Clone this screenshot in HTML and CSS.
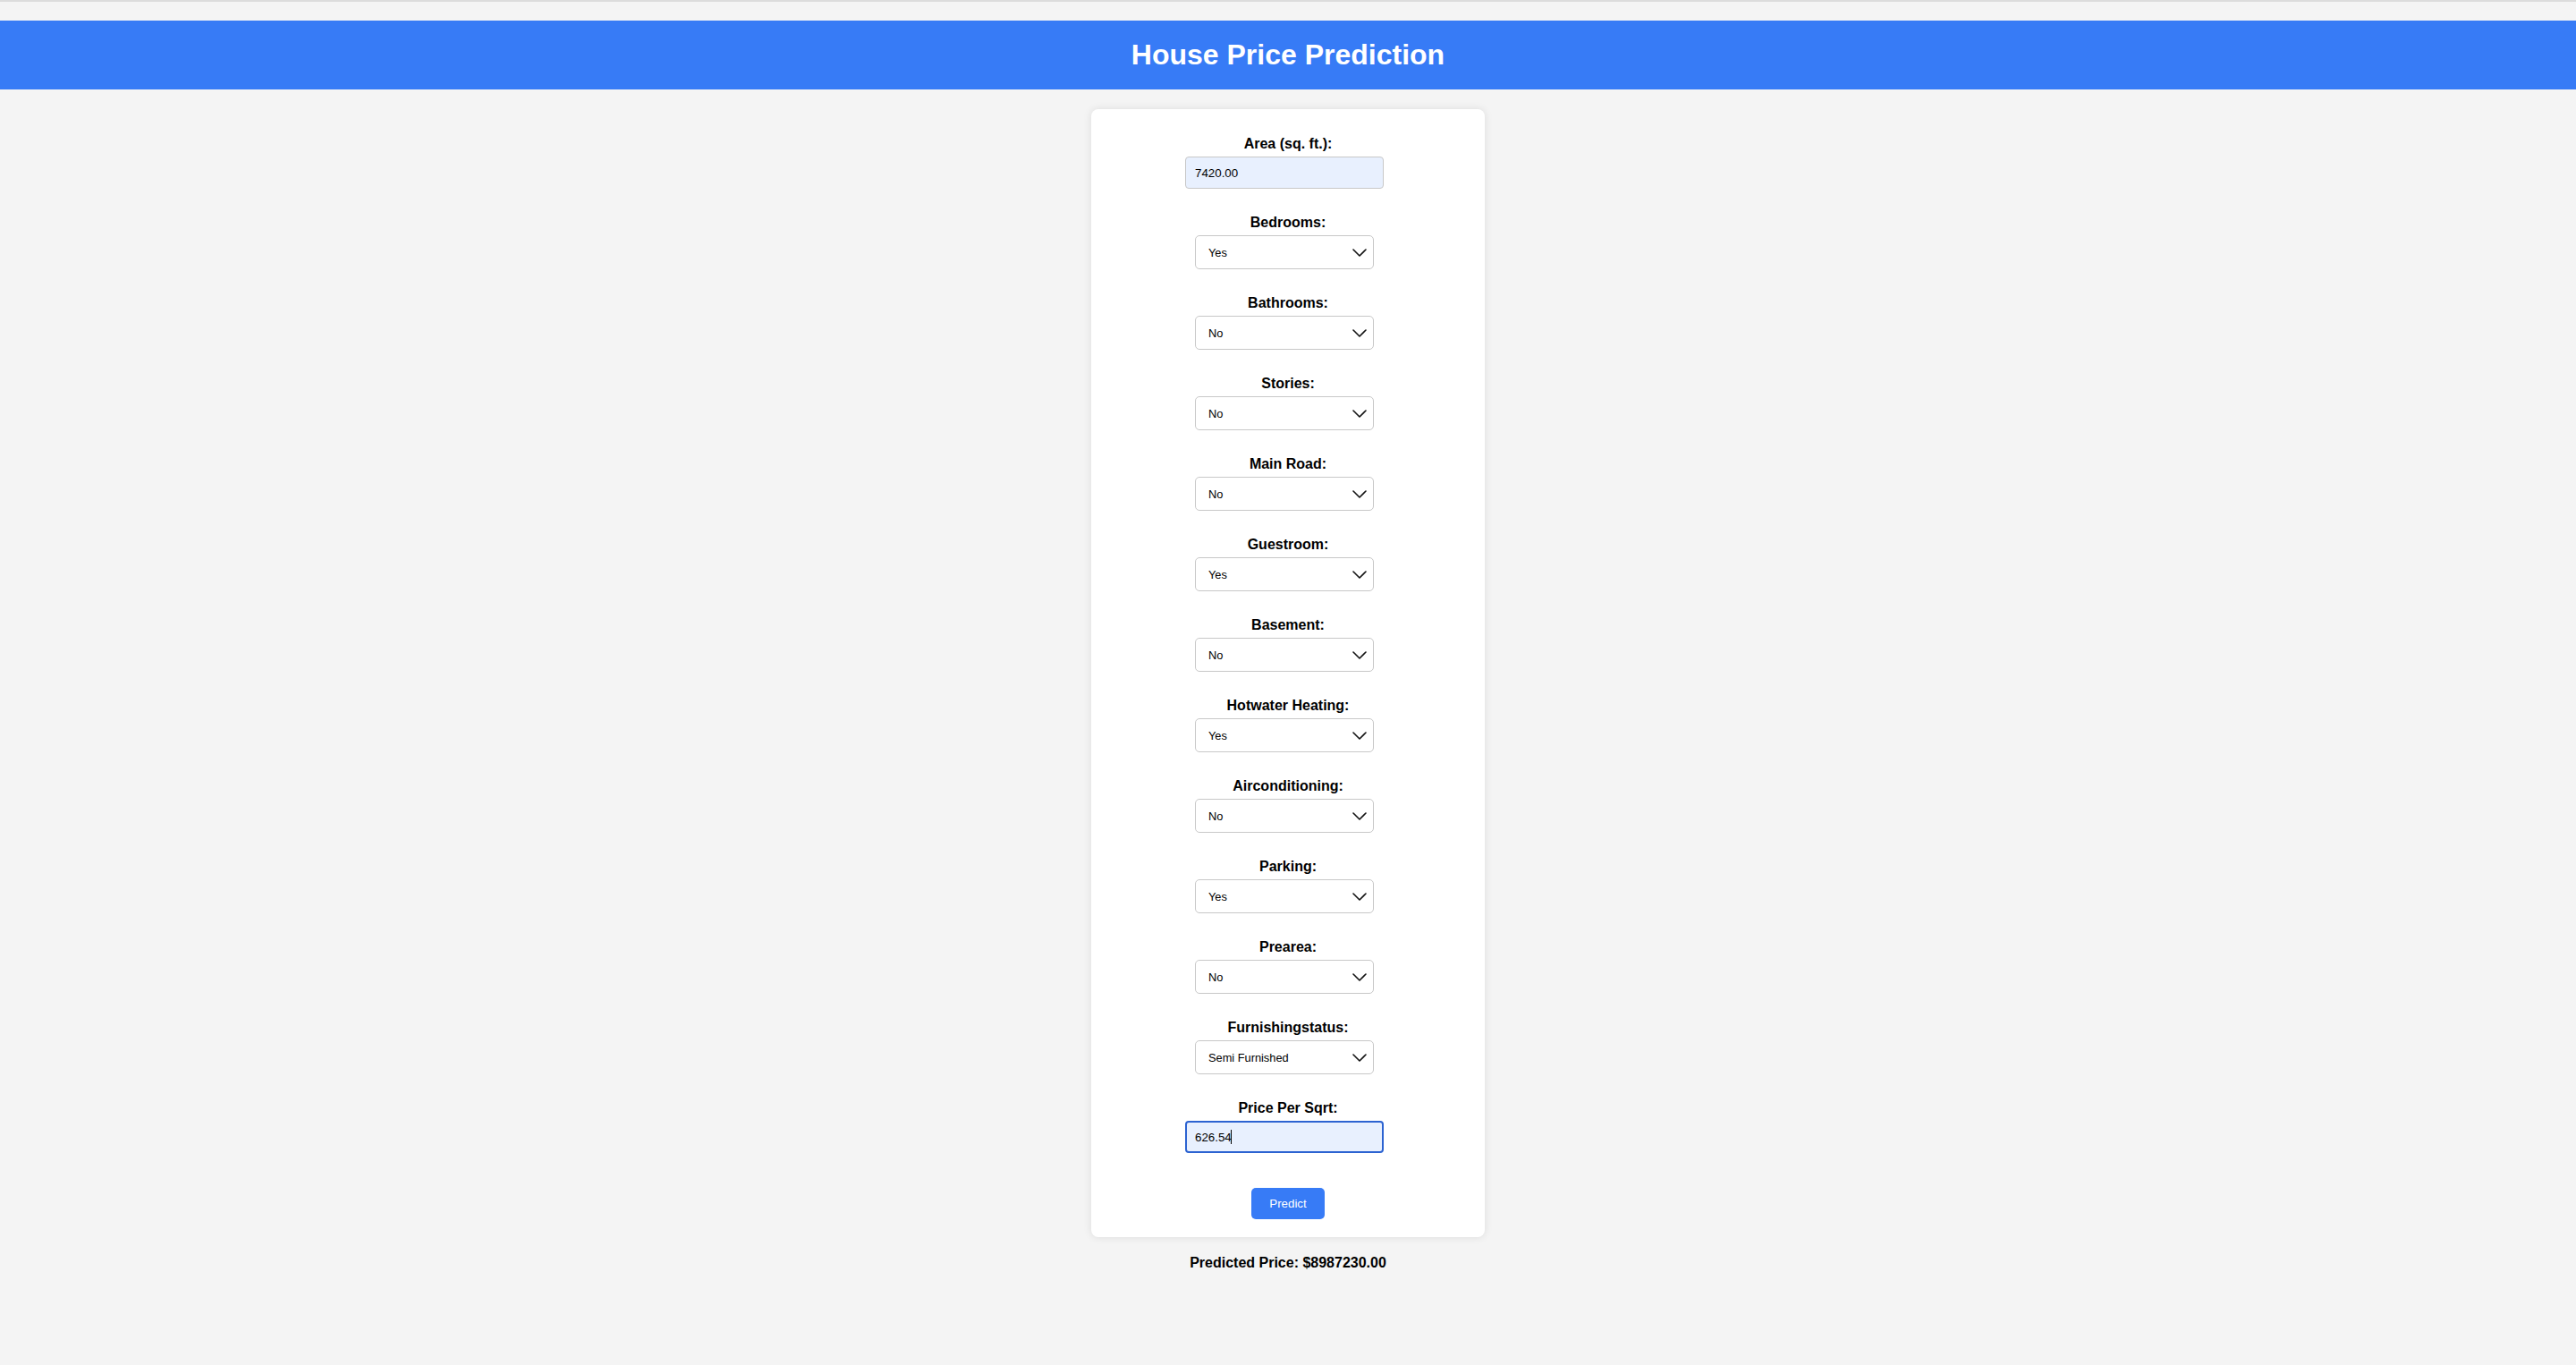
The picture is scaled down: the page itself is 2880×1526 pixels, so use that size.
FILE: index.html
```html
<!DOCTYPE html>
<html lang="en">
<head>
<meta charset="utf-8">
<title>House Price Prediction</title>
<link rel="stylesheet" href="styles.css">
</head>
<body>
<div class="topline"></div>
<header class="header"><h1>House Price Prediction</h1></header>
<main class="container">
  <form class="card">
    <div class="group">
      <label>Area (sq. ft.):</label>
      <input class="field" type="text" value="7420.00">
    </div>
    <div class="group">
      <label>Bedrooms:</label>
      <div class="select-wrap"><select><option>Yes</option><option>No</option></select><svg class="chev" viewBox="0 0 16 9"><path d="M1 1 L8 8 L15 1"/></svg></div>
    </div>
    <div class="group">
      <label>Bathrooms:</label>
      <div class="select-wrap"><select><option>No</option><option>Yes</option></select><svg class="chev" viewBox="0 0 16 9"><path d="M1 1 L8 8 L15 1"/></svg></div>
    </div>
    <div class="group">
      <label>Stories:</label>
      <div class="select-wrap"><select><option>No</option><option>Yes</option></select><svg class="chev" viewBox="0 0 16 9"><path d="M1 1 L8 8 L15 1"/></svg></div>
    </div>
    <div class="group">
      <label>Main Road:</label>
      <div class="select-wrap"><select><option>No</option><option>Yes</option></select><svg class="chev" viewBox="0 0 16 9"><path d="M1 1 L8 8 L15 1"/></svg></div>
    </div>
    <div class="group">
      <label>Guestroom:</label>
      <div class="select-wrap"><select><option>Yes</option><option>No</option></select><svg class="chev" viewBox="0 0 16 9"><path d="M1 1 L8 8 L15 1"/></svg></div>
    </div>
    <div class="group">
      <label>Basement:</label>
      <div class="select-wrap"><select><option>No</option><option>Yes</option></select><svg class="chev" viewBox="0 0 16 9"><path d="M1 1 L8 8 L15 1"/></svg></div>
    </div>
    <div class="group">
      <label>Hotwater Heating:</label>
      <div class="select-wrap"><select><option>Yes</option><option>No</option></select><svg class="chev" viewBox="0 0 16 9"><path d="M1 1 L8 8 L15 1"/></svg></div>
    </div>
    <div class="group">
      <label>Airconditioning:</label>
      <div class="select-wrap"><select><option>No</option><option>Yes</option></select><svg class="chev" viewBox="0 0 16 9"><path d="M1 1 L8 8 L15 1"/></svg></div>
    </div>
    <div class="group">
      <label>Parking:</label>
      <div class="select-wrap"><select><option>Yes</option><option>No</option></select><svg class="chev" viewBox="0 0 16 9"><path d="M1 1 L8 8 L15 1"/></svg></div>
    </div>
    <div class="group">
      <label>Prearea:</label>
      <div class="select-wrap"><select><option>No</option><option>Yes</option></select><svg class="chev" viewBox="0 0 16 9"><path d="M1 1 L8 8 L15 1"/></svg></div>
    </div>
    <div class="group">
      <label>Furnishingstatus:</label>
      <div class="select-wrap"><select><option>Semi Furnished</option><option>Furnished</option><option>Unfurnished</option></select><svg class="chev" viewBox="0 0 16 9"><path d="M1 1 L8 8 L15 1"/></svg></div>
    </div>
    <div class="group">
      <label>Price Per Sqrt:</label>
      <div class="input-wrap"><input class="field focused" type="text" value="626.54"><span class="caret"></span></div>
    </div>
    <button class="btn" type="button">Predict</button>
  </form>
  <p class="result">Predicted Price: $8987230.00</p>
</main>
</body>
</html>
```

FILE: styles.css
```css
* { box-sizing: border-box; }

html, body {
  margin: 0;
  padding: 0;
  background: #f4f4f4;
  font-family: "Liberation Sans", Arial, sans-serif;
  color: #000;
}

.topline {
  height: 2px;
  background: #dcdcdc;
}

.header {
  margin-top: 21px;
  background: #377bf6;
  padding: 20px;
  text-align: center;
}

.header h1 {
  margin: 0;
  color: #fff;
  font-size: 32px;
  font-weight: bold;
  line-height: 37px;
}

.container {
  display: flex;
  flex-direction: column;
  align-items: center;
  padding-top: 22px;
}

.card {
  width: 440px;
  background: #fff;
  border-radius: 8px;
  box-shadow: 0 0 10px rgba(0, 0, 0, 0.1);
  padding: 29px 20px 20px;
  display: flex;
  flex-direction: column;
  align-items: center;
}

.group {
  display: flex;
  flex-direction: column;
  align-items: center;
  margin-bottom: 28px;
  width: 100%;
}

.group label {
  display: block;
  font-size: 16px;
  font-weight: bold;
  line-height: 20px;
  margin-bottom: 4px;
}

.field {
  width: 222px;
  height: 36px;
  margin-right: 8px;
  padding: 0 10px;
  border: 1px solid #c8c8c8;
  border-radius: 4px;
  background: #e8f0fe;
  font-family: "Liberation Sans", Arial, sans-serif;
  font-size: 13.333px;
  color: #000;
  outline: none;
}

.input-wrap {
  position: relative;
  margin-right: 8px;
}

.input-wrap .field {
  margin-right: 0;
}

.field.focused {
  border: 2px solid #2c63d1;
  padding: 0 9px;
}

.caret {
  position: absolute;
  left: 51px;
  top: 10px;
  width: 1px;
  height: 16px;
  background: #000;
}

.select-wrap {
  position: relative;
  width: 200px;
  height: 38px;
  margin-right: 8px;
}

.select-wrap select {
  -webkit-appearance: none;
  appearance: none;
  width: 200px;
  height: 38px;
  padding: 0 30px 0 14px;
  border: 1px solid #c8c8c8;
  border-radius: 5px;
  background: #fff;
  font-family: "Liberation Sans", Arial, sans-serif;
  font-size: 12.8px;
  color: #000;
  outline: none;
}

.chev {
  position: absolute;
  right: 8px;
  top: 15px;
  width: 16px;
  height: 9px;
  pointer-events: none;
}

.chev path {
  fill: none;
  stroke: #111;
  stroke-width: 1.6;
  stroke-linecap: round;
  stroke-linejoin: round;
}

.btn {
  margin-top: 11px;
  padding: 0 20px;
  height: 35px;
  border: none;
  border-radius: 5px;
  background: #377bf6;
  color: #fff;
  font-family: "Liberation Sans", Arial, sans-serif;
  font-size: 13.333px;
}

.result {
  margin: 20px 0 0;
  font-size: 16px;
  font-weight: bold;
  line-height: 18px;
}
```
